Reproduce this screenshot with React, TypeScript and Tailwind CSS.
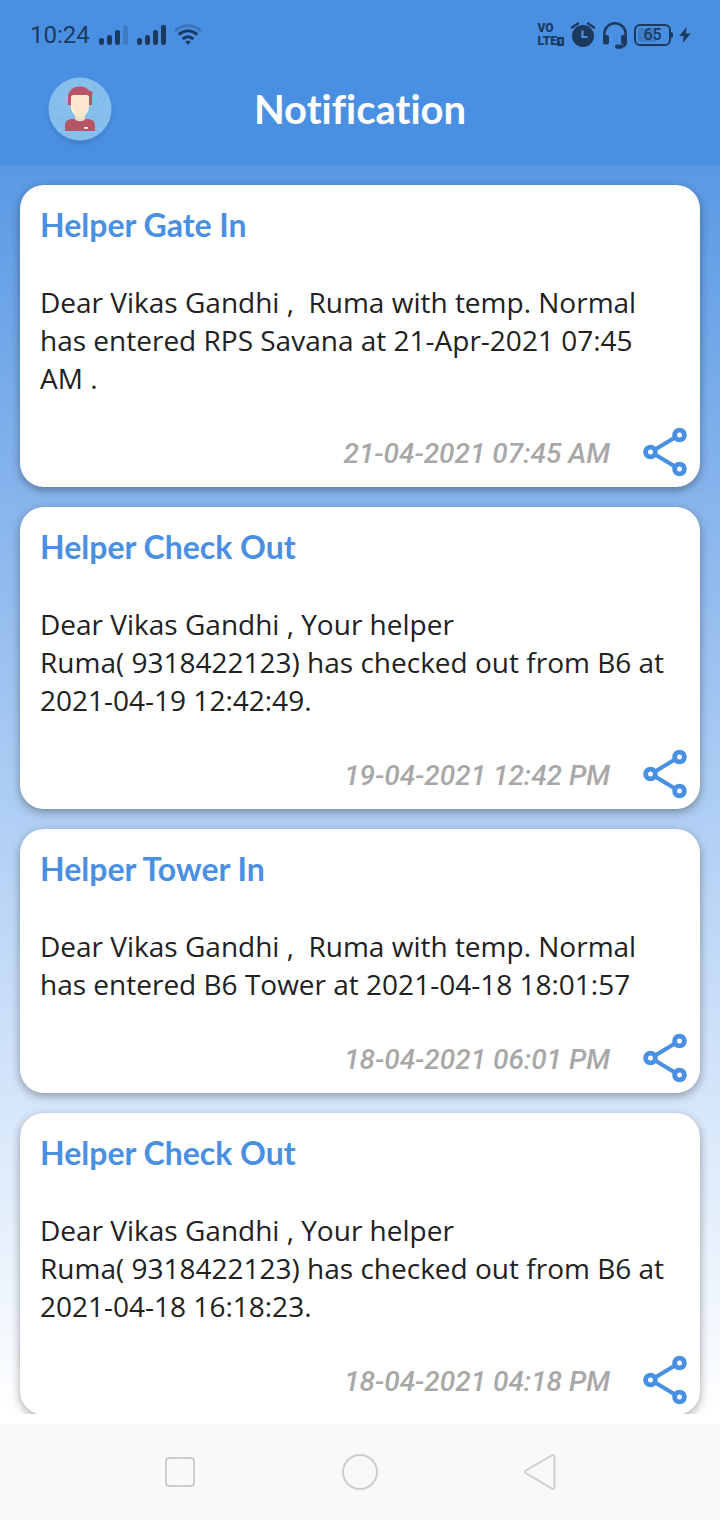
import React from 'react';

type Notification = {
  id: number;
  title: string;
  message: string;
  date: string;
};

const notifications: Notification[] = [
  {
    id: 1,
    title: 'Helper Gate In',
    message: 'Dear Vikas Gandhi ,  Ruma with temp. Normal has entered RPS Savana at 21-Apr-2021 07:45 AM .',
    date: '21-04-2021 07:45 AM',
  },
  {
    id: 2,
    title: 'Helper Check Out',
    message: 'Dear Vikas Gandhi , Your helper Ruma(\u00a09318422123) has checked out from B6 at 2021-04-19 12:42:49.',
    date: '19-04-2021 12:42 PM',
  },
  {
    id: 3,
    title: 'Helper Tower In',
    message: 'Dear Vikas Gandhi ,  Ruma with temp. Normal has entered B6 Tower at 2021-04-18 18:01:57',
    date: '18-04-2021 06:01 PM',
  },
  {
    id: 4,
    title: 'Helper Check Out',
    message: 'Dear Vikas Gandhi , Your helper Ruma(\u00a09318422123) has checked out from B6 at 2021-04-18 16:18:23.',
    date: '18-04-2021 04:18 PM',
  },
];

function SignalIcon({ weak = false }: { weak?: boolean }) {
  return (
    <svg width="30" height="22" viewBox="0 0 30 22" fill="currentColor">
      <rect x="1" y="14" width="5" height="7" rx="2" />
      <rect x="9" y="11" width="5" height="10" rx="2" />
      <rect x="17" y="6" width="5" height="15" rx="2" />
      <rect x="25" y="1" width="5" height="20" rx="2" opacity={weak ? 0.25 : 1} />
    </svg>
  );
}

function WifiIcon() {
  return (
    <svg width="28" height="22" viewBox="0 0 28 22" fill="none" stroke="currentColor" strokeWidth="3">
      <path d="M1 7.2C8.500 0 19.500 0 27 7.200" opacity="0.3" />
      <path d="M4.800 10.500C10.500 5.700 17.500 5.700 23.200 10.500" />
      <path d="M8.700 15C12 12.200 16 12.200 19.300 15" />
      <path d="M11.200 17.600c1.700-1.200 3.900-1.200 5.600 0L14 21z" fill="currentColor" stroke="none" />
    </svg>
  );
}

function AlarmIcon() {
  return (
    <svg width="26" height="26" viewBox="0 0 26 26" fill="none">
      <circle cx="13" cy="14" r="11" fill="currentColor" />
      <path d="M2 5.500L8 1.500M18 1.500l6 4" stroke="currentColor" strokeWidth="2.500" strokeLinecap="round" />
      <path d="M12.500 8.500V15h5" stroke="#4a90e2" strokeWidth="2.200" />
    </svg>
  );
}

function HeadsetIcon() {
  return (
    <svg width="26" height="28" viewBox="0 0 26 28" fill="none" stroke="currentColor" strokeWidth="2.500">
      <path d="M2.300 18v-5a10.700 10.700 0 0 1 21.400 0v9a3.500 3.500 0 0 1-3.500 3.500H17" />
      <rect x="1" y="14" width="6" height="9.500" rx="2" fill="currentColor" stroke="none" />
      <rect x="19" y="14" width="6" height="9.500" rx="2" fill="currentColor" stroke="none" />
      <rect x="13" y="23.500" width="8" height="4.300" rx="2" fill="currentColor" stroke="none" />
    </svg>
  );
}

function StatusBar() {
  return (
    <div className="flex h-[70px] items-center justify-between pr-[29px] pl-[30px] text-[#1c3a5f]">
      <div className="flex items-center gap-2">
        <span className="font-[Roboto] text-2xl">10:24</span>
        <SignalIcon weak />
        <SignalIcon />
        <WifiIcon />
      </div>
      <div className="flex items-center gap-[6px]">
        <div className="font-[Roboto] text-xs leading-[13px] font-black">
          <div>VO</div>
          <div className="flex items-center">
            LTE
            <span className="flex h-[9px] w-[7px] items-center justify-center rounded-[1px] bg-[#1c3a5f] text-[8px] leading-[9px] text-[#4a90e2]">
              1
            </span>
          </div>
        </div>
        <AlarmIcon />
        <HeadsetIcon />
        <div className="flex items-center">
          <div className="flex h-[22px] w-[37px] items-center justify-center rounded-md border-2 border-[#1c3a5f] bg-linear-to-r from-[#3a7dcb] from-60% to-transparent to-60% bg-clip-content p-[2px] font-[Roboto] text-base font-medium">
            65
          </div>
          <div className="h-[6px] w-[2px] rounded-r bg-[#1c3a5f]" />
        </div>
        <svg width="12" height="16" viewBox="0 0 12 16" fill="currentColor">
          <path d="M7.500 0L0.300 9h4.400L3.800 16 11.700 6.500H7z" />
        </svg>
      </div>
    </div>
  );
}

function Avatar() {
  return (
    <svg width="64" height="64" viewBox="0 0 64 64">
      <circle cx="32" cy="32" r="31.500" fill="#87bfec" />
      <g fill="none" stroke="#78b3e4" strokeWidth="0.600">
        <path d="M47 4c1 11-7 16-8 27M53 8c1 15-10 20-6 33M58 14c0 16-11 17-12 28" />
        <path d="M1 34c8-4 14-3 23-9M5 46c8-7 14-3 22 3s17 3 24-2" />
      </g>
      <path d="M20 28V20c0-6 5-10.500 12-10.500 4 0 7 1.500 9 4 4 0 4 3 3 5v9.500z" fill="#b75465" />
      <path d="M27 35h10v11H27z" fill="#f3dcc3" />
      <path d="M23 20c0-1 1-2 2-2h14c1 0 2 1 2 2v9c0 6-3 10-9 11-6-1-9-5-9-11z" fill="#fbe7ce" />
      <path d="M23 21c1 6 0 10 6 17-5-2-6-6-6-9z" fill="#fff5e5" />
      <path d="M17 54v-5c0-5 3-7 8-7h2c1 3 9 3 10 0h2c5 0 8 2 8 7v5z" fill="#b75465" />
      <rect x="36" y="50" width="4" height="1.800" rx="0.900" fill="#fff" />
    </svg>
  );
}

function ShareIcon() {
  return (
    <svg width="50" height="50" viewBox="0 0 50 50" fill="none" stroke="#4a90e2">
      <path d="M11 25L39 8M11 25L39 42" strokeWidth="4" />
      <g fill="#fff" strokeWidth="4.800">
        <circle cx="10.500" cy="25" r="4.900" />
        <circle cx="39.500" cy="8" r="4.900" />
        <circle cx="39.500" cy="42" r="4.900" />
      </g>
    </svg>
  );
}

function NotificationCard({ item }: { item: Notification }) {
  return (
    <article className="shrink-0 rounded-3xl bg-white px-5 pt-5 pb-[10px] shadow-[0_3px_10px_rgba(0,0,0,0.35)]">
      <h2 className="font-[Lato] text-[32px] leading-10 font-bold text-[#4a90e2]">{item.title}</h2>
      <p className="mt-[38px] font-[Open_Sans] text-[28px] leading-[38px] whitespace-pre-wrap text-[#212121]">
        {item.message}
      </p>
      <div className="-mr-[10px] mt-[30px] flex items-center justify-end gap-[30px]">
        <time className="pt-1 font-[Roboto] text-[28px] leading-10 font-medium text-[#a8a8a8] italic">{item.date}</time>
        <button type="button" aria-label="Share">
          <ShareIcon />
        </button>
      </div>
    </article>
  );
}

function NavBar() {
  return (
    <nav className="flex h-24 shrink-0 items-center justify-center gap-36 bg-[#f9f9f9]">
      <button type="button" aria-label="Recent apps">
        <svg width="36" height="36" viewBox="0 0 36 36" fill="none" stroke="#cecece" strokeWidth="2">
          <rect x="4" y="4" width="28" height="28" rx="3" />
        </svg>
      </button>
      <button type="button" aria-label="Home">
        <svg width="36" height="36" viewBox="0 0 36 36" fill="none" stroke="#cecece" strokeWidth="2">
          <circle cx="18" cy="18" r="17" />
        </svg>
      </button>
      <button type="button" aria-label="Back">
        <svg width="36" height="36" viewBox="0 0 36 36" fill="none" stroke="#cecece" strokeWidth="2" strokeLinejoin="round">
          <path d="M4.500 16L29 1.800c2-1 3.500-.3 3.500 1.700v29c0 2-1.500 2.700-3.500 1.700L4.500 19.500c-1.800-1-1.800-2.500 0-3.500z" />
        </svg>
      </button>
    </nav>
  );
}

export default function App() {
  return (
    <div className="flex h-screen flex-col bg-white">
      <header className="h-[165px] shrink-0 bg-[#4a90e2]">
        <StatusBar />
        <div className="grid grid-cols-[1fr_auto_1fr] items-center px-12 pt-[7px]">
          <button type="button" aria-label="Profile" className="w-16 rounded-full shadow-md">
            <Avatar />
          </button>
          <h1 className="font-[Lato] text-[40px] leading-[48px] font-bold text-white [font-variant-ligatures:none]">
            Notification
          </h1>
        </div>
      </header>

      <main className="mb-[10px] flex min-h-0 flex-1 flex-col gap-5 overflow-hidden bg-linear-to-b from-[#5999e4] to-white px-5 pt-5">
        {notifications.map((item) => (
          <NotificationCard key={item.id} item={item} />
        ))}
      </main>

      <NavBar />
    </div>
  );
}
